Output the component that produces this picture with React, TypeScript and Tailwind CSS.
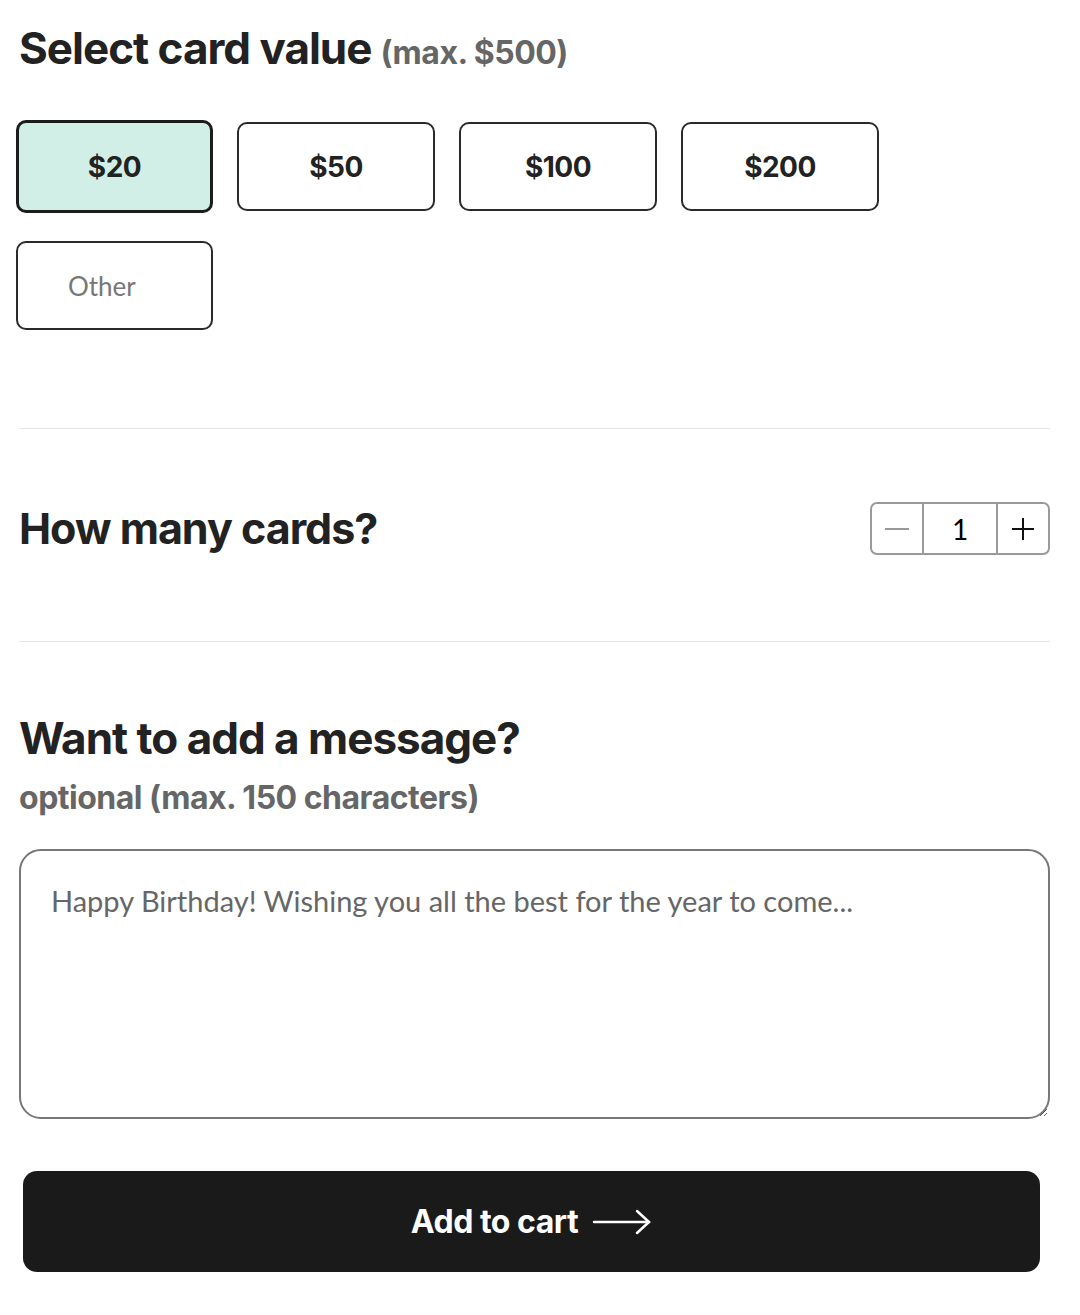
import { useState } from "react";

const values = ["$20", "$50", "$100", "$200"];

export default function App() {
  const [selected, setSelected] = useState("$20");
  const [count, setCount] = useState(1);

  return (
    <div className="w-[1080px] bg-white font-['Lato',sans-serif] text-[#222]">
      <div className="pl-[19px] pr-[30px] pt-[20px]">
        <h2 className="flex items-baseline gap-[9px] leading-[56px] font-['Inter',sans-serif]">
          <span className="text-[44px] font-bold tracking-[-1px]">Select card value</span>
          <span className="text-[32px] font-bold text-[#666] tracking-[-0.5px]">(max. $500)</span>
        </h2>

        <div className="mt-[39px] -ml-[3px] flex flex-wrap items-center gap-x-[24px] gap-y-[28px] w-[900px]">
          {values.map((v) => (
            <button
              key={v}
              onClick={() => setSelected(v)}
              className={
                v === selected
                  ? "w-[197px] h-[93px] rounded-[10px] border-[3px] border-[#1c1c1c] bg-[#d1efe6] text-[28px] font-bold font-['Inter',sans-serif] tracking-[-0.5px]"
                  : "w-[198px] h-[89px] rounded-[10px] border-2 border-[#2a2a2a] bg-white text-[28px] font-bold font-['Inter',sans-serif] tracking-[-0.5px]"
              }
            >
              {v}
            </button>
          ))}
          <input
            className="w-[197px] h-[89px] rounded-[10px] border-2 border-[#2a2a2a] bg-white pl-[50px] text-[26px] outline-none placeholder:text-[#777]"
            placeholder="Other"
          />
        </div>

        <div className="mt-[98px] h-px bg-[#e5e5e5]" />

        <div className="flex items-center justify-between pt-[73px] pb-[86px]">
          <h2 className="text-[43px] leading-[53px] font-bold tracking-[-1px] font-['Inter',sans-serif]">How many cards?</h2>
          <div className="flex h-[53px] w-[180px] rounded-[7px] border-2 border-[#9a9a9a] overflow-hidden">
            <button
              onClick={() => setCount(Math.max(1, count - 1))}
              className="w-[52px] flex items-center justify-center border-r-2 border-[#9a9a9a]"
            >
              <span className="block w-[24px] h-[2px] bg-[#999]" />
            </button>
            <div className="flex-1 flex items-center justify-center text-[28px] text-black">{count}</div>
            <button
              onClick={() => setCount(count + 1)}
              className="w-[52px] flex items-center justify-center border-l-2 border-[#9a9a9a]"
            >
              <svg width="26" height="26" viewBox="0 0 26 26" stroke="#111" strokeWidth="2">
                <line x1="13" y1="2" x2="13" y2="24" />
                <line x1="2" y1="13" x2="24" y2="13" />
              </svg>
            </button>
          </div>
        </div>

        <div className="h-px bg-[#e5e5e5]" />

        <h2 className="mt-[66px] text-[44px] font-bold tracking-[-1px] leading-[60px] font-['Inter',sans-serif]">Want to add a message?</h2>
        <p className="mt-[10px] text-[32px] font-bold text-[#666] leading-[40px] tracking-[-0.5px] font-['Inter',sans-serif]">optional (max. 150 characters)</p>

        <textarea
          className="mt-[31px] block w-full h-[270px] rounded-[22px] border-2 border-[#777] px-[30px] pt-[28px] text-[29px] outline-none placeholder:text-[#666]"
          placeholder="Happy Birthday! Wishing you all the best for the year to come..."
        />

        <button className="mt-[52px] ml-[4px] w-[1017px] h-[101px] rounded-[14px] bg-[#1a1a1a] text-white flex items-center justify-center gap-[14px]">
          <span className="text-[32px] font-bold tracking-[-0.5px] font-['Inter',sans-serif]">Add to cart</span>
          <svg width="60" height="28" viewBox="0 0 60 28" fill="none" stroke="white" strokeWidth="2.5" strokeLinecap="round">
            <line x1="2" y1="14" x2="57" y2="14" />
            <polyline points="45,3 57,14 45,25" />
          </svg>
        </button>
      </div>
    </div>
  );
}
